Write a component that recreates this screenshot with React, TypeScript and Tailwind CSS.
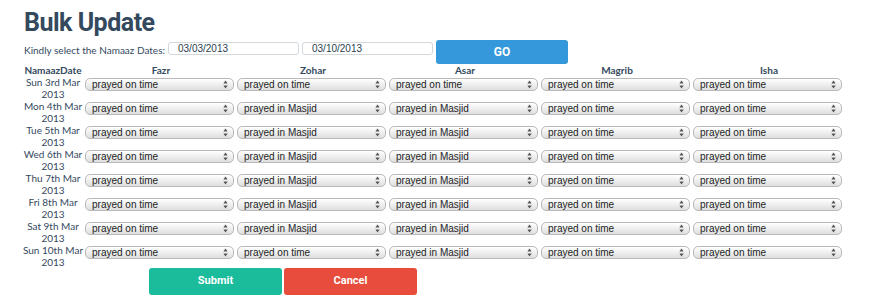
import React from 'react';

const T = 'prayed on time';
const M = 'prayed in Masjid';

const rows: { day: string; values: string[] }[] = [
  { day: 'Sun 3rd Mar', values: [T, T, T, T, T] },
  { day: 'Mon 4th Mar', values: [T, M, M, T, T] },
  { day: 'Tue 5th Mar', values: [T, M, M, T, T] },
  { day: 'Wed 6th Mar', values: [T, M, M, T, T] },
  { day: 'Thu 7th Mar', values: [T, M, M, T, T] },
  { day: 'Fri 8th Mar', values: [T, M, M, T, T] },
  { day: 'Sat 9th Mar', values: [T, M, M, T, T] },
  { day: 'Sun 10th Mar', values: [T, T, M, T, T] },
];

const prayers = ['Fazr', 'Zohar', 'Asar', 'Magrib', 'Isha'];

const Arrows = () => (
  <svg width="5" height="9" viewBox="0 0 5 9" className="shrink-0">
    <path d="M2.5 0.5 L4.6 3.4 L0.4 3.4 Z" fill="#555" />
    <path d="M2.5 8.5 L4.6 5.6 L0.4 5.6 Z" fill="#555" />
  </svg>
);

const FakeSelect = ({ value }: { value: string }) => (
  <div className="mt-[2px] flex h-[13px] w-[149px] items-center justify-between rounded-[5px] border border-[#b9b9b9] bg-gradient-to-b from-white to-[#dedede] pl-[6px] pr-[5px] font-['Liberation_Sans',Arial,sans-serif] text-[10px] leading-none text-[#1e1e1e]">
    <span>{value}</span>
    <Arrows />
  </div>
);

export default function App() {
  return (
    <div className="h-[300px] w-[880px] bg-white font-['Lato',sans-serif] text-[#34495e]">
      <h1 className="ml-[24px] pt-[9px] font-['Roboto',Arial,sans-serif] text-[25px] font-bold leading-[28px] tracking-[-0.5px]">
        Bulk Update
      </h1>

      <div className="mt-[3px] ml-[24px] flex h-[24px] items-start">
        <span className="mt-[3px] w-[144px] text-[10px] leading-[14px] whitespace-nowrap">Kindly select the Namaaz Dates:</span>
        <div className="mt-[2px] flex h-[13px] w-[131px] items-center rounded-[3px] border border-[#d3d8dc] bg-white pl-[9px] font-['Liberation_Sans',Arial,sans-serif] text-[10px] leading-none text-[#2c3e50]">
          03/03/2013
        </div>
        <div className="mt-[2px] ml-[3px] flex h-[13px] w-[131px] items-center rounded-[3px] border border-[#d3d8dc] bg-white pl-[9px] font-['Liberation_Sans',Arial,sans-serif] text-[10px] leading-none text-[#2c3e50]">
          03/10/2013
        </div>
        <button className="ml-[3px] flex h-[24px] w-[132px] items-center justify-center rounded-[3px] bg-[#3498db] font-['Roboto',Arial,sans-serif] text-[12px] font-bold text-white">
          GO
        </button>
      </div>

      <div className="ml-[21px] grid grid-cols-[64px_repeat(5,152px)]">
        <div className="text-center text-[10px] font-bold leading-[12px]">NamaazDate</div>
        {prayers.map((p) => (
          <div key={p} className="text-center text-[10px] font-bold leading-[12px]">
            {p}
          </div>
        ))}

        {rows.map((r) => (
          <React.Fragment key={r.day}>
            <div className="h-[24px] text-center text-[10px] leading-[12px] whitespace-nowrap">
              <div>{r.day}</div>
              <div>2013</div>
            </div>
            {r.values.map((v, i) => (
              <div key={i} className="h-[24px]">
                <FakeSelect value={v} />
              </div>
            ))}
          </React.Fragment>
        ))}
      </div>

      <div className="ml-[149px] flex gap-[2px]">
        <button className="flex h-[27px] w-[133px] items-center justify-center rounded-[3px] bg-[#1abc9c] font-['Roboto',Arial,sans-serif] text-[11px] font-bold text-white">
          Submit
        </button>
        <button className="flex h-[27px] w-[133px] items-center justify-center rounded-[3px] bg-[#e74c3c] font-['Roboto',Arial,sans-serif] text-[11px] font-bold text-white">
          Cancel
        </button>
      </div>
    </div>
  );
}
